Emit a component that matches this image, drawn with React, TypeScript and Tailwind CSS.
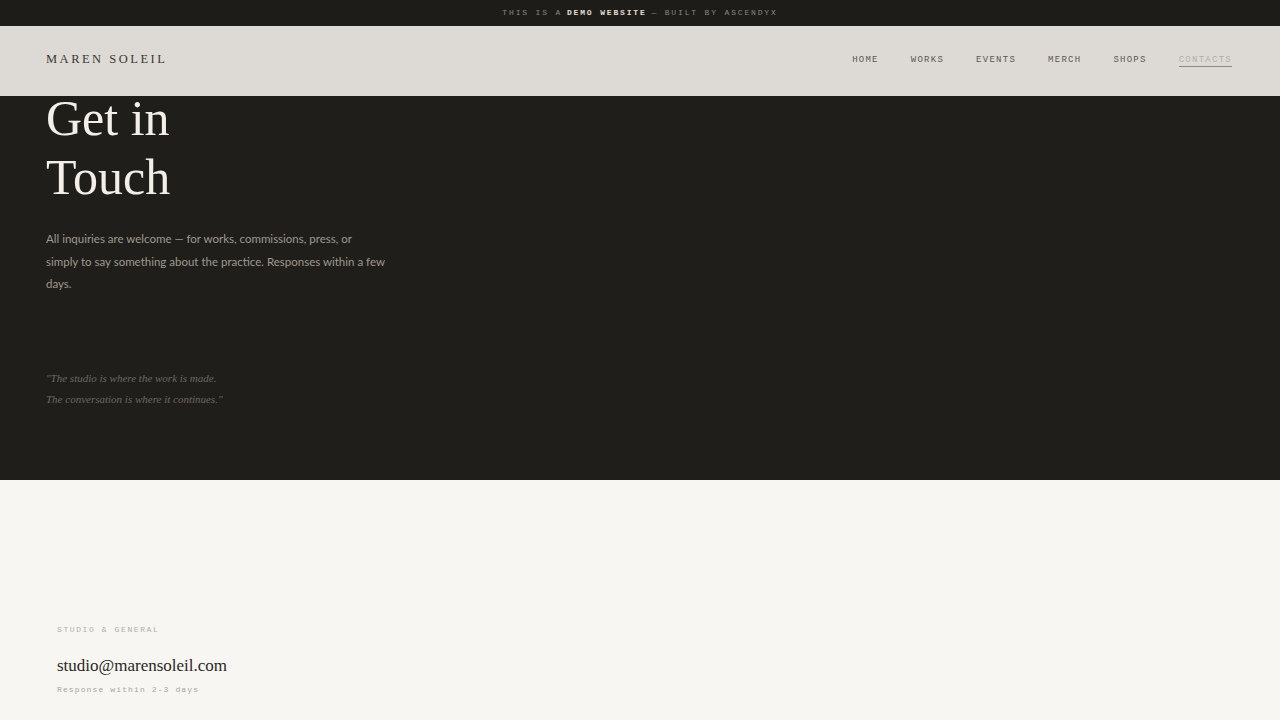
import React from 'react';

// Nav links
const links = ['HOME', 'WORKS', 'EVENTS', 'MERCH', 'SHOPS', 'CONTACTS'];

const App = () => {
  return (
    <div className="min-h-screen bg-[#f7f6f2]">
      {/* Demo banner */}
      <div className="h-[26px] bg-[#1e1c19] flex items-center justify-center font-['Liberation_Mono','DejaVu_Sans_Mono',monospace] text-[8px] tracking-[0.23em] text-[#8a8780]">
        THIS IS A <span className="mx-[0.6em] font-bold text-[#e2ded6]">DEMO WEBSITE</span> — BUILT BY ASCENDYX
      </div>

      {/* Header */}
      <header className="h-[70px] bg-[#dddad5] flex items-center justify-between px-[46px]">
        <div className="mb-[4px] font-['Liberation_Serif','DejaVu_Serif',serif] text-[12.5px] tracking-[0.2em] text-[#3a3632]">
          MAREN SOLEIL
        </div>
        <nav className="flex items-center gap-[32px] pr-[2px] mb-[1px] font-['Liberation_Mono','DejaVu_Sans_Mono',monospace]">
          {links.map((l) => (
            <a
              key={l}
              href="#"
              className={
                l === 'CONTACTS'
                  ? 'text-[9px] leading-[11px] tracking-[0.14em] text-[#b4afa8] border-b border-[#8f8a83] mt-[1px]'
                  : 'text-[9px] leading-[11px] tracking-[0.14em] text-[#5c5752]'
              }
            >
              {l}
            </a>
          ))}
        </nav>
      </header>

      {/* Hero */}
      <section className="h-[384px] bg-[#201e1b] px-[46px]">
        <h1 className="font-['Liberation_Serif','DejaVu_Serif',serif] text-[50px] text-[#f3efe8]">
          <span className="block leading-[45px]">Get in</span>
          <span className="block leading-[72px]">Touch</span>
        </h1>
        <p className="mt-[15px] max-w-[340px] font-['Lato','Noto_Sans',sans-serif] text-[11.5px] leading-[22.5px] text-[#9f998f]">
          All inquiries are welcome — for works, commissions, press, or simply to say something about the practice. Responses within a few days.
        </p>
        <p className="mt-[72px] font-['Liberation_Serif','DejaVu_Serif',serif] italic text-[11px] leading-[21px] text-[#6d6861]">
          "The studio is where the work is made.
          <br />
          The conversation is where it continues."
        </p>
      </section>

      {/* Contact details */}
      <section className="px-[57px] pt-[144px] pb-[40px]">
        <div className="font-['Liberation_Mono','DejaVu_Sans_Mono',monospace] text-[8px] tracking-[0.2em] text-[#b3afa8]">
          STUDIO &amp; GENERAL
        </div>
        <div className="mt-[17px] font-['Liberation_Serif','DejaVu_Serif',serif] text-[17px] text-[#2a2724]">
          studio@marensoleil.com
        </div>
        <div className="mt-[5px] font-['Liberation_Mono','DejaVu_Sans_Mono',monospace] text-[8px] tracking-[0.14em] text-[#aaa59d]">
          Response within 2-3 days
        </div>
      </section>
    </div>
  );
};

export default App;
